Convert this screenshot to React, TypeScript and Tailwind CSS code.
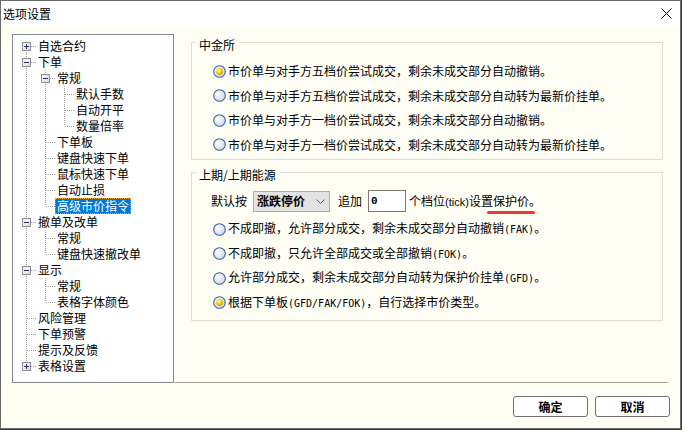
import React from 'react';

type TreeNode = { t: string; l: number; exp?: '+' | '-'; sel?: boolean };

const TREE: TreeNode[] = [
  { t: '自选合约', l: 0, exp: '+' },
  { t: '下单', l: 0, exp: '-' },
  { t: '常规', l: 1, exp: '-' },
  { t: '默认手数', l: 2 },
  { t: '自动开平', l: 2 },
  { t: '数量倍率', l: 2 },
  { t: '下单板', l: 1 },
  { t: '键盘快速下单', l: 1 },
  { t: '鼠标快速下单', l: 1 },
  { t: '自动止损', l: 1 },
  { t: '高级市价指令', l: 1, sel: true },
  { t: '撤单及改单', l: 0, exp: '-' },
  { t: '常规', l: 1 },
  { t: '键盘快速撤改单', l: 1 },
  { t: '显示', l: 0, exp: '-' },
  { t: '常规', l: 1 },
  { t: '表格字体颜色', l: 1 },
  { t: '风险管理', l: 0 },
  { t: '下单预警', l: 0 },
  { t: '提示及反馈', l: 0 },
  { t: '表格设置', l: 0, exp: '+' },
];

// true when the first later node at level <= lvl sits exactly at lvl
function continues(i: number, lvl: number) {
  for (let j = i + 1; j < TREE.length; j++) {
    if (TREE[j].l < lvl) return false;
    if (TREE[j].l === lvl) return true;
  }
  return false;
}

const DOT = { stroke: '#a0a0a0', strokeWidth: 1, strokeDasharray: '1 1', shapeRendering: 'crispEdges' as const };

function Cell({ top, bottom, stub, exp }: { top?: boolean; bottom?: boolean; stub?: boolean; exp?: '+' | '-' }) {
  return (
    <svg width="19" height="16" className="block shrink-0">
      {top && <line x1="9.5" y1="0" x2="9.5" y2="8" {...DOT} />}
      {bottom && <line x1="9.5" y1="8" x2="9.5" y2="16" {...DOT} />}
      {stub && <line x1={exp ? 14 : 10} y1="8.5" x2="19" y2="8.5" {...DOT} />}
      {exp && (
        <>
          <defs>
            <linearGradient id="tb" x1="0" y1="0" x2="1" y2="1">
              <stop offset="0" stopColor="#ffffff" />
              <stop offset="1" stopColor="#d6d6d6" />
            </linearGradient>
          </defs>
          <rect x="5.5" y="4.5" width="8" height="8" fill="url(#tb)" stroke="#8f8f8f" shapeRendering="crispEdges" />
          <line x1="7" y1="8.5" x2="12" y2="8.5" stroke="#1e2f6b" shapeRendering="crispEdges" />
          {exp === '+' && <line x1="9.5" y1="6" x2="9.5" y2="11" stroke="#1e2f6b" shapeRendering="crispEdges" />}
        </>
      )}
    </svg>
  );
}

function Tree() {
  return (
    <div className="mt-[3px] h-[349px] w-[162px] shrink-0 border border-[#828790] bg-white pl-[4px] pt-[3px]">
      {TREE.map((n, i) => {
        const cells = [];
        for (let k = 0; k < n.l; k++) cells.push(<Cell key={k} top={continues(i, k)} bottom={continues(i, k)} />);
        cells.push(<Cell key="own" top={i !== 0} bottom={continues(i, n.l)} stub exp={n.exp} />);
        return (
          <div key={i} className="flex h-[16px] items-center">
            {cells}
            <span
              className={
                n.sel
                  ? 'px-[2px] leading-[16px] bg-[#0078d7] text-white outline outline-1 outline-dotted outline-[#f0a030] -outline-offset-1'
                  : 'px-[2px] leading-[16px] text-black'
              }
            >
              {n.t}
            </span>
          </div>
        );
      })}
    </div>
  );
}

function Radio({ on }: { on?: boolean }) {
  return (
    <svg width="13" height="13" viewBox="0 0 13 13" className="block shrink-0">
      <defs>
        <radialGradient id="rbg" cx="0.35" cy="0.35" r="0.7">
          <stop offset="0" stopColor="#ffffff" />
          <stop offset="1" stopColor="#cfd8e6" />
        </radialGradient>
        <radialGradient id="rdot" cx="0.4" cy="0.35" r="0.7">
          <stop offset="0" stopColor="#fff5a0" />
          <stop offset="0.6" stopColor="#f2cc00" />
          <stop offset="1" stopColor="#d08a00" />
        </radialGradient>
      </defs>
      <circle cx="6.5" cy="6.5" r="5.8" fill="url(#rbg)" stroke="#3a64a0" strokeWidth="1.1" />
      {on && <circle cx="6.5" cy="6.5" r="3.4" fill="url(#rdot)" />}
    </svg>
  );
}

function Mono({ children }: { children: React.ReactNode }) {
  return <span className="font-['DejaVu_Sans_Mono'] text-[10px]">{children}</span>;
}

function Option({ on, children }: { on?: boolean; children: React.ReactNode }) {
  return (
    <div className="flex h-[24.5px] items-center gap-[2px]">
      <Radio on={on} />
      <span className="leading-[16px] whitespace-nowrap">{children}</span>
    </div>
  );
}

function Group({ title, children, pb }: { title: string; children: React.ReactNode; pb: string }) {
  return (
    <fieldset className={`ml-[16px] w-[472px] border border-[#dcdcdc] ${pb}`}>
      <legend className="ml-[4px] pl-[3px] pr-[4px] pt-[6px] leading-[16px]">{title}</legend>
      {children}
    </fieldset>
  );
}

export default function App() {
  return (
    <div className="h-[430px] w-[682px] bg-[#3b3b3b] font-['Noto_Sans_CJK_SC',sans-serif] text-[12px] text-black">
      <div className="flex h-[429px] w-[681px] flex-col border border-[#6b6b6b] bg-[#fefef5]">
        <div className="flex h-[25px] shrink-0 items-center justify-between bg-white pl-[2px] pr-[8px]">
          <span className="leading-[16px]">选项设置</span>
          <svg width="11" height="11" viewBox="0 0 11 11" className="block">
            <path d="M0.5 0.5 L10.5 10.5 M10.5 0.5 L0.5 10.5" stroke="#000" strokeWidth="1" />
          </svg>
        </div>

        <div className="flex pl-[11px] pt-[5px]">
          <Tree />
          <div className="ml-[1px] flex w-[493px] flex-col">
            <Group title="中金所" pb="pb-[2px]">
              <div className="pl-[21px] pt-[6px]">
                <Option on>市价单与对手方五档价尝试成交，剩余未成交部分自动撤销。</Option>
                <Option>市价单与对手方五档价尝试成交，剩余未成交部分自动转为最新价挂单。</Option>
                <Option>市价单与对手方一档价尝试成交，剩余未成交部分自动撤销。</Option>
                <Option>市价单与对手方一档价尝试成交，剩余未成交部分自动转为最新价挂单。</Option>
              </div>
            </Group>

            <div className="mt-[1px]">
              <Group title="上期/上期能源" pb="pb-[5px]">
                <div className="ml-[19px] mt-[7px] flex h-[22px] items-center whitespace-nowrap">
                  <span className="leading-[16px]">默认按</span>
                  <div className="ml-[6px] flex h-[21px] w-[77px] items-center justify-between border border-[#adadad] bg-[#e3e3e3] pl-[3px] pr-[4px]">
                    <span className="font-bold leading-[16px]">涨跌停价</span>
                    <svg width="9" height="5" viewBox="0 0 9 5" className="block">
                      <path d="M0.5 0.5 L4.5 4.5 L8.5 0.5" fill="none" stroke="#606060" strokeWidth="1" />
                    </svg>
                  </div>
                  <span className="ml-[8px] leading-[16px]">追加</span>
                  <div className="ml-[6px] flex h-[22px] w-[38px] items-center border border-[#7a7a7a] bg-white pl-[2px]">
                    <span className="font-['Liberation_Mono'] text-[11px] font-bold">0</span>
                  </div>
                  <span className="ml-[3px] leading-[16px]">
                    个档位<span className="font-['Liberation_Sans'] text-[11px]">(tick)</span>设置
                    <span className="relative">
                      保护价
                      <span className="absolute -left-[6px] -right-[6px] top-[19px] h-[3px] rounded-full bg-[#ec3b34]" />
                    </span>
                    。
                  </span>
                </div>
                <div className="mt-[5px] pl-[21px]">
                  <Option>
                    不成即撤，允许部分成交，剩余未成交部分自动撤销<Mono>(FAK)</Mono>。
                  </Option>
                  <Option>
                    不成即撤，只允许全部成交或全部撤销<Mono>(FOK)</Mono>。
                  </Option>
                  <Option>
                    允许部分成交，剩余未成交部分自动转为保护价挂单<Mono>(GFD)</Mono>。
                  </Option>
                  <Option on>
                    根据下单板<Mono>(GFD/FAK/FOK)</Mono>，自行选择市价类型。
                  </Option>
                </div>
              </Group>
            </div>

            <div className="flex-1" />
            <div className="h-px w-full bg-[#a0a0a0]" />
          </div>
        </div>

        <div className="mt-[13px] flex justify-end gap-[7px] pr-[10px]">
          <button className="flex h-[21px] w-[75px] items-center justify-center rounded-[3px] border border-[#707070] bg-white font-bold leading-[16px]">
            确定
          </button>
          <button className="flex h-[21px] w-[75px] items-center justify-center rounded-[3px] border border-[#707070] bg-white font-bold leading-[16px]">
            取消
          </button>
        </div>
      </div>
    </div>
  );
}
